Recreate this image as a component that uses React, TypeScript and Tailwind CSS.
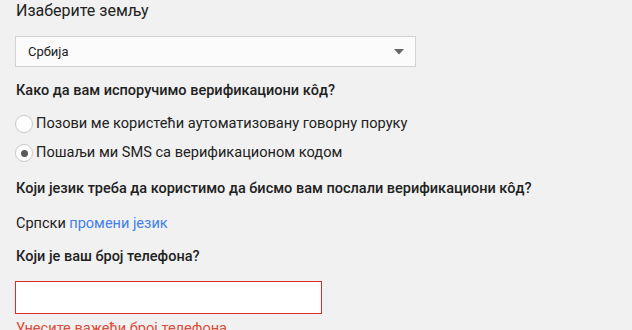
import React from "react";

const font = { fontFamily: "Roboto, 'Noto Sans', sans-serif" };

const Radio = ({ checked }: { checked?: boolean }) => (
  <span className="w-[18px] h-[18px] rounded-full border border-[#c8c8c8] bg-white flex items-center justify-center shrink-0">
    {checked && <span className="w-[7px] h-[7px] rounded-full bg-[#5a5a5a]" />}
  </span>
);

export default function App() {
  return (
    <div
      className="w-[632px] h-[330px] overflow-hidden bg-[#f1f1f1] text-[#212121] pl-[15px]"
      style={font}
    >
      {/* Country */}
      <div className="text-[16px] leading-[22px] pl-px">Изаберите земљу</div>
      <div className="mt-[14px] w-[401px] h-[31px] border border-[#d2d2d2] bg-[#fbfbfb] flex items-center justify-between pl-[12px] pr-[10px]">
        <span className="text-[13px] text-[#222]">Србија</span>
        <svg width="10" height="6" viewBox="0 0 10 6" className="mr-[1px]">
          <path d="M0 0h10L5 5.5z" fill="#666" />
        </svg>
      </div>

      {/* Delivery method */}
      <div className="mt-[14px] text-[14.5px] leading-[20px] font-medium pl-px">
        Како да вам испоручимо верификациони кôд?
      </div>
      <div className="mt-[11px] flex flex-col gap-[5px]">
        <label className="flex items-center gap-[3px] h-[24px] text-[14.6px]">
          <Radio />
          <span>Позови ме користећи аутоматизовану говорну поруку</span>
        </label>
        <label className="flex items-center gap-[3px] h-[24px] text-[14.6px]">
          <Radio checked />
          <span>Пошаљи ми SMS са верификационом кодом</span>
        </label>
      </div>

      {/* Language */}
      <div className="mt-[14px] text-[14.5px] leading-[20px] font-medium pl-px">
        Који језик треба да користимо да бисмо вам послали верификациони кôд?
      </div>
      <div className="mt-[15px] text-[14.5px] leading-[20px] pl-px">
        Српски <span className="text-[#427fed]">промени језик</span>
      </div>

      {/* Phone */}
      <div className="mt-[13px] text-[14.5px] leading-[20px] font-medium pl-px">
        Који је ваш број телефона?
      </div>
      <input
        type="tel"
        className="block mt-[14px] w-[307px] h-[33px] border border-[#e02a2a] bg-white outline-none px-2"
      />
      <div className="mt-[4px] text-[14.6px] leading-[20px] text-[#dd4b39] pl-px">
        Унесите важећи број телефона.
      </div>
    </div>
  );
}
